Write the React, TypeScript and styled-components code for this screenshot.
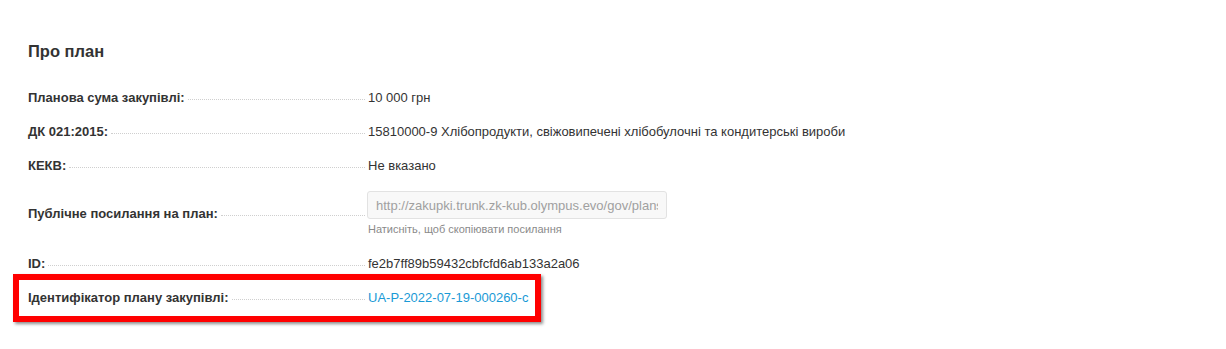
import React from "react";
import styled, { createGlobalStyle } from "styled-components";

const GlobalStyle = createGlobalStyle`
  html, body {
    margin: 0;
    padding: 0;
    background: #ffffff;
  }
  body {
    font-family: "Liberation Sans", Arial, sans-serif;
    color: #333333;
  }
`;

const Page = styled.div`
  padding: 41px 28px 0 28px;
  width: 1226px;
  height: 349px;
  box-sizing: border-box;
`;

const Heading = styled.h2`
  margin: 0 0 27px 0;
  font-size: 16.5px;
  line-height: 20px;
  font-weight: bold;
  color: #333333;
`;

const List = styled.div`
  display: flex;
  flex-direction: column;
  gap: 14px;
`;

const Row = styled.div<{ $extraTop?: number }>`
  position: relative;
  display: flex;
  align-items: center;
  margin-top: ${(p) => p.$extraTop ?? 0}px;
`;

const Label = styled.div`
  width: 340px;
  flex: none;
  display: flex;
  align-items: baseline;
  font-size: 13px;
  line-height: 20px;
  font-weight: bold;
  color: #333333;
  white-space: nowrap;
`;

const Leader = styled.span`
  flex: 1;
  margin: 0 3px 0 3px;
  border-bottom: 1px dotted #cfcfcf;
  transform: translateY(-2px);
`;

const Value = styled.div`
  font-size: 13px;
  line-height: 20px;
  color: #333333;
  white-space: nowrap;
`;

const Link = styled.a`
  font-size: 13px;
  line-height: 20px;
  color: #1a9ad6;
  text-decoration: none;
`;

const CopyBlock = styled.div`
  display: flex;
  flex-direction: column;
`;

const CopyInput = styled.input`
  width: 300px;
  height: 28px;
  box-sizing: border-box;
  margin-left: -1px;
  padding: 0 8px;
  border: 1px solid #e2e2e2;
  border-radius: 3px;
  background: #f8f8f8;
  color: #a0a0a0;
  font-family: "Liberation Sans", Arial, sans-serif;
  font-size: 13px;
  outline: none;
`;

const Hint = styled.div`
  margin-top: 3px;
  font-size: 11px;
  line-height: 14px;
  color: #8a8a8a;
`;

const Highlight = styled.div`
  position: absolute;
  left: -15px;
  top: -14px;
  width: 528px;
  height: 48px;
  box-sizing: border-box;
  border: 6px solid #ff0000;
  box-shadow: 2px 2px 3px rgba(0, 0, 0, 0.45);
  pointer-events: none;
`;

const rows: { label: string; value: string }[] = [
  { label: "Планова сума закупівлі:", value: "10 000 грн" },
  {
    label: "ДК 021:2015:",
    value:
      "15810000-9 Хлібопродукти, свіжовипечені хлібобулочні та кондитерські вироби",
  },
  { label: "КЕКВ:", value: "Не вказано" },
];

export default function App() {
  return (
    <>
      <GlobalStyle />
      <Page>
        <Heading>Про план</Heading>
        <List>
          {rows.map((r) => (
            <Row key={r.label}>
              <Label>
                {r.label}
                <Leader />
              </Label>
              <Value>{r.value}</Value>
            </Row>
          ))}
          <Row $extraTop={1}>
            <Label>
              Публічне посилання на план:
              <Leader />
            </Label>
            <CopyBlock>
              <CopyInput
                readOnly
                value="http://zakupki.trunk.zk-kub.olympus.evo/gov/plans/fe2b7ff89b59432cbfcfd6ab133a2a06"
              />
              <Hint>Натисніть, щоб скопіювати посилання</Hint>
            </CopyBlock>
          </Row>
          <Row $extraTop={4}>
            <Label>
              ID:
              <Leader />
            </Label>
            <Value>fe2b7ff89b59432cbfcfd6ab133a2a06</Value>
          </Row>
          <Row>
            <Label>
              Ідентифікатор плану закупівлі:
              <Leader />
            </Label>
            <Link href="#">UA-P-2022-07-19-000260-c</Link>
            <Highlight />
          </Row>
        </List>
      </Page>
    </>
  );
}
